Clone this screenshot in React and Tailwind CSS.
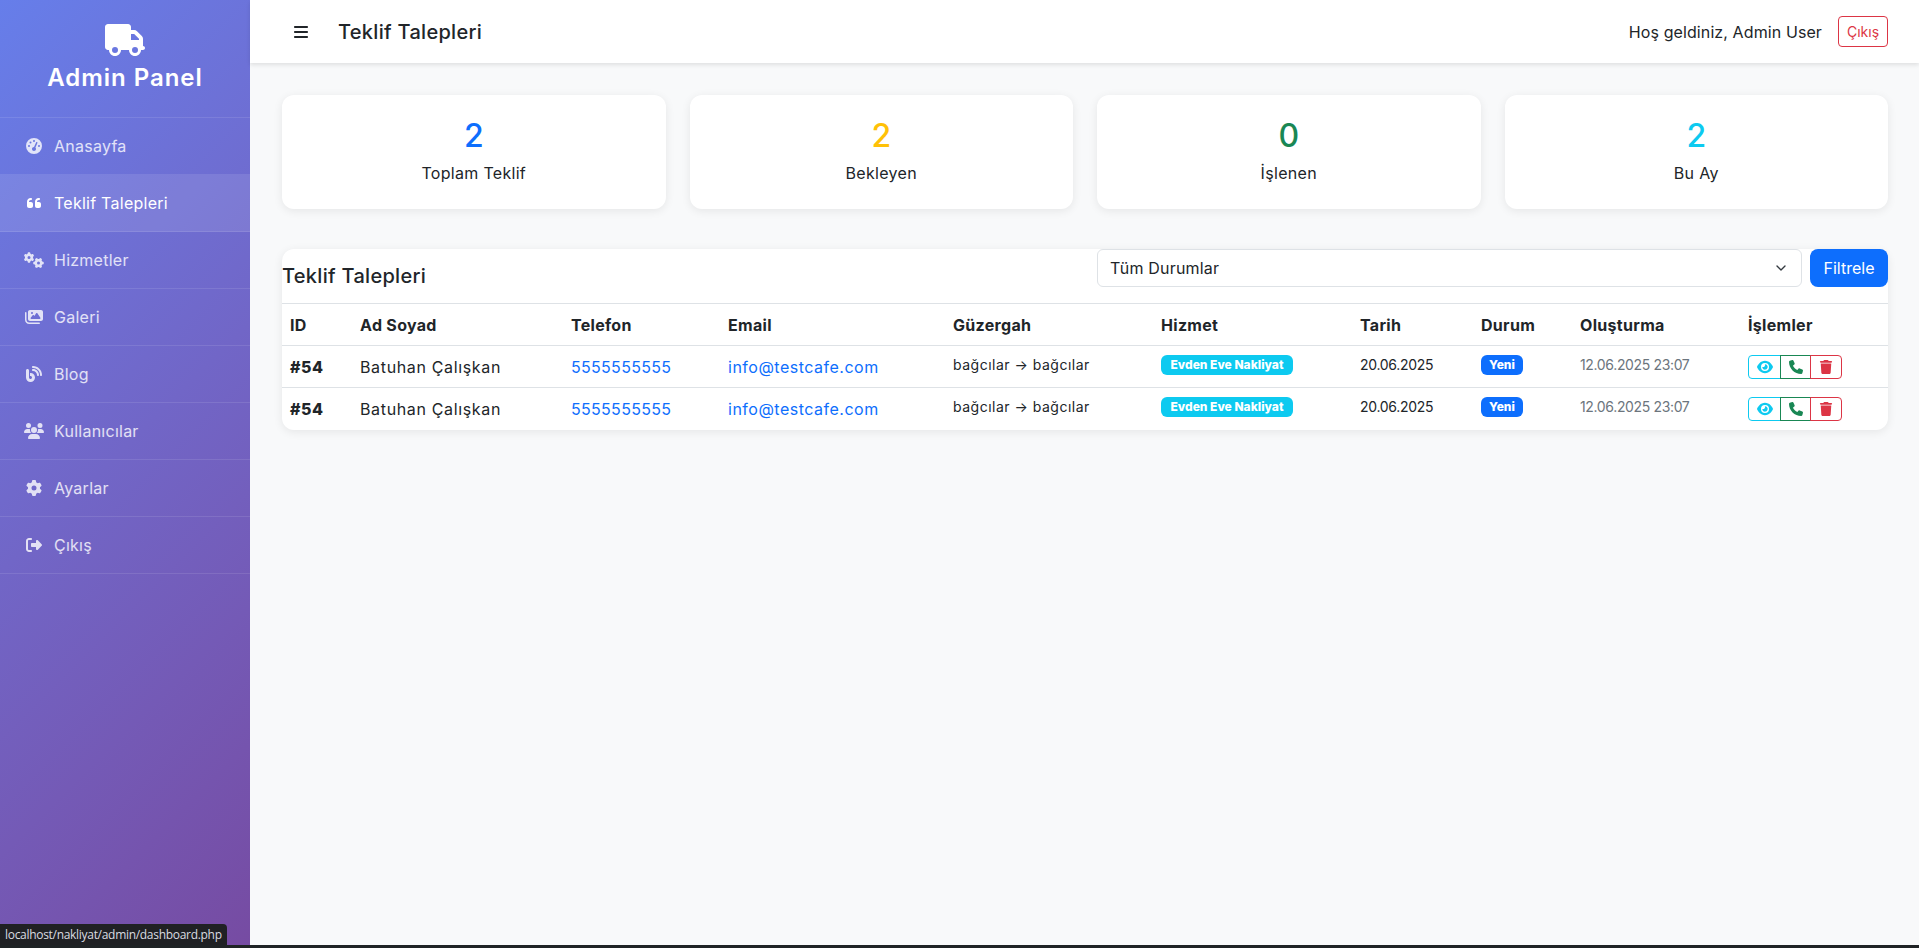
import React from "react";
import {
  FaTruck,
  FaGaugeHigh,
  FaQuoteLeft,
  FaGears,
  FaImages,
  FaBlog,
  FaUsers,
  FaGear,
  FaRightFromBracket,
  FaBars,
  FaEye,
  FaPhone,
  FaTrash,
} from "react-icons/fa6";
import { ChevronDown } from "lucide-react";

const menu = [
  { label: "Anasayfa", icon: FaGaugeHigh, size: "w-4 h-4" },
  { label: "Teklif Talepleri", icon: FaQuoteLeft, size: "w-4 h-4", active: true },
  { label: "Hizmetler", icon: FaGears, size: "w-5 h-5" },
  { label: "Galeri", icon: FaImages, size: "w-[18px] h-[18px]" },
  { label: "Blog", icon: FaBlog, size: "w-4 h-4" },
  { label: "Kullanıcılar", icon: FaUsers, size: "w-5 h-5" },
  { label: "Ayarlar", icon: FaGear, size: "w-4 h-4" },
  { label: "Çıkış", icon: FaRightFromBracket, size: "w-4 h-4" },
];

const stats = [
  { value: 2, label: "Toplam Teklif", color: "text-[#0d6efd]" },
  { value: 2, label: "Bekleyen", color: "text-[#ffc107]" },
  { value: 0, label: "İşlenen", color: "text-[#198754]" },
  { value: 2, label: "Bu Ay", color: "text-[#0dcaf0]" },
];

const columns = [
  { label: "ID", width: "w-[70px]" },
  { label: "Ad Soyad", width: "w-[211px]" },
  { label: "Telefon", width: "w-[157px]" },
  { label: "Email", width: "w-[225px]" },
  { label: "Güzergah", width: "w-[208px]" },
  { label: "Hizmet", width: "w-[199px]" },
  { label: "Tarih", width: "w-[121px]" },
  { label: "Durum", width: "w-[99px]" },
  { label: "Oluşturma", width: "w-[168px]" },
  { label: "İşlemler", width: "w-[148px]" },
];

const rows = [1, 2];

const Sidebar = () => (
  <aside className="w-[250px] h-[948px] shrink-0 bg-linear-135 from-[#667eea] to-[#764ba2]">
    <div className="h-[118px] border-b border-white/10 flex flex-col items-center pt-6 text-white">
      <FaTruck className="w-10 h-8" />
      <h1 className="text-2xl leading-[29px] font-semibold mt-[7px] tracking-[0.95px]">Admin Panel</h1>
    </div>
    <nav>
      {menu.map((item) => (
        <a
          key={item.label}
          href="#"
          className={`h-[57px] flex items-center pl-6 border-b border-white/10 text-base tracking-[0.25px] ${
            item.active ? "bg-white/10 text-white" : "text-white/80"
          }`}
        >
          <span className="w-5 mr-2.5 flex justify-center">
            <item.icon className={item.size} />
          </span>
          {item.label}
        </a>
      ))}
    </nav>
  </aside>
);

const Topbar = () => (
  <header className="h-[63px] bg-white shadow-[0_2px_4px_rgba(0,0,0,0.1)] flex items-center justify-between px-[31px] relative">
    <div className="flex items-center">
      <button className="w-10 h-[38px] flex items-center justify-center text-[#212529]">
        <FaBars className="text-base" />
      </button>
      <h2 className="ml-[17px] text-xl font-medium text-[#212529] tracking-[0.3px]">Teklif Talepleri</h2>
    </div>
    <div className="flex items-center">
      <span className="text-base text-[#212529] tracking-[0.1px]">Hoş geldiniz, Admin User</span>
      <button className="ml-4 w-[50px] h-[31px] border border-[#dc3545] rounded text-sm text-[#dc3545]">Çıkış</button>
    </div>
  </header>
);

const StatCard = ({ value, label, color }) => (
  <div className="h-[114px] bg-white rounded-xl shadow-[0_2px_10px_rgba(0,0,0,0.08)] flex flex-col items-center pt-[22px]">
    <div className={`text-[32px] leading-[38px] font-medium ${color}`}>{value}</div>
    <div className="mt-1.5 text-base text-[#212529] tracking-[0.3px]">{label}</div>
  </div>
);

const QuoteRow = () => (
  <tr className="h-[42px] border-t border-[#dee2e6] text-[#212529]">
    <td className="px-2 pt-[9px] align-top font-extrabold tracking-[0.5px]">#54</td>
    <td className="px-2 pt-[9px] align-top tracking-[0.65px]">Batuhan Çalışkan</td>
    <td className="px-2 pt-[9px] align-top">
      <a href="#" className="text-[#0d6efd] tracking-[0.3px]">5555555555</a>
    </td>
    <td className="px-2 pt-[9px] align-top">
      <a href="#" className="text-[#0d6efd] tracking-[0.5px]">info@testcafe.com</a>
    </td>
    <td className="px-2 pt-[9px] align-top text-sm tracking-[0.5px]">bağcılar → bağcılar</td>
    <td className="px-2 pt-[9px] align-top">
      <span className="flex items-center justify-center w-[132px] h-5 rounded-md bg-[#0dcaf0] text-white text-xs font-extrabold">
        Evden Eve Nakliyat
      </span>
    </td>
    <td className="px-2 pt-[9px] align-top text-sm tracking-[-0.3px]">20.06.2025</td>
    <td className="px-2 pt-[9px] align-top">
      <span className="flex items-center justify-center w-[42px] h-5 rounded-md bg-[#0d6efd] text-white text-xs font-extrabold">
        Yeni
      </span>
    </td>
    <td className="px-2 pt-[9px] align-top text-sm text-[#6c757d] tracking-[-0.35px]">12.06.2025 23:07</td>
    <td className="px-2 pt-[9px] align-top">
      <div className="flex h-6 w-[94px]">
        <button className="w-[33px] flex items-center justify-center border border-[#0dcaf0] rounded-l text-[#0dcaf0]">
          <FaEye className="w-4 h-4" />
        </button>
        <button className="w-[31px] -ml-px flex items-center justify-center border border-[#198754] text-[#198754]">
          <FaPhone className="w-3.5 h-3.5" />
        </button>
        <button className="w-[32px] -ml-px flex items-center justify-center border border-[#dc3545] rounded-r text-[#dc3545]">
          <FaTrash className="w-3.5 h-3.5" />
        </button>
      </div>
    </td>
  </tr>
);

const App = () => {
  return (
    <div className="relative h-[948px] overflow-hidden flex bg-[#f8f9fa] font-[family-name:Inter,sans-serif]">
      <Sidebar />

      <div className="flex-1 min-w-0">
        <Topbar />

        <main className="pl-8 pr-[31px] pt-8">
          <div className="grid grid-cols-4 gap-6">
            {stats.map((s) => (
              <StatCard key={s.label} {...s} />
            ))}
          </div>

          <section className="mt-10 bg-white rounded-xl shadow-[0_2px_10px_rgba(0,0,0,0.08)]">
            <div className="h-[54px] flex justify-between">
              <h3 className="self-center text-xl font-medium text-[#212529] tracking-[0.3px]">Teklif Talepleri</h3>
              <div className="w-[791px] flex gap-2 h-[38px]">
                <div className="relative flex-1">
                  <select className="w-full h-full appearance-none bg-white border border-[#dee2e6] rounded-md pl-3 text-base text-[#212529] tracking-[0.2px]">
                    <option>Tüm Durumlar</option>
                  </select>
                  <ChevronDown className="absolute right-[13px] top-[11px] w-4 h-4 text-[#343a40] pointer-events-none" />
                </div>
                <button className="w-[78px] rounded-lg bg-[#0d6efd] text-white text-base">Filtrele</button>
              </div>
            </div>
            <table className="w-full table-fixed border-collapse">
              <thead>
                <tr className="h-[42px] border-t border-[#dee2e6]">
                  {columns.map((c) => (
                    <th key={c.label} className={`${c.width} px-2 text-left text-base font-bold text-[#212529] tracking-[0.3px]`}>
                      {c.label}
                    </th>
                  ))}
                </tr>
              </thead>
              <tbody>
                {rows.map((r) => (
                  <QuoteRow key={r} />
                ))}
              </tbody>
            </table>
          </section>
        </main>
      </div>

      {/* browser status bubble + window edge */}
      <div className="absolute left-0 bottom-[3px] h-[21px] w-[227px] bg-[#202124] rounded-tr text-[#dadce0] text-xs tracking-[-0.3px] flex items-center pl-[5px] font-[family-name:'Open_Sans',sans-serif]">
        localhost/nakliyat/admin/dashboard.php
      </div>
      <div className="absolute left-0 right-0 bottom-0 h-[3px] bg-[#1f2325]" />
    </div>
  );
};

export default App;
